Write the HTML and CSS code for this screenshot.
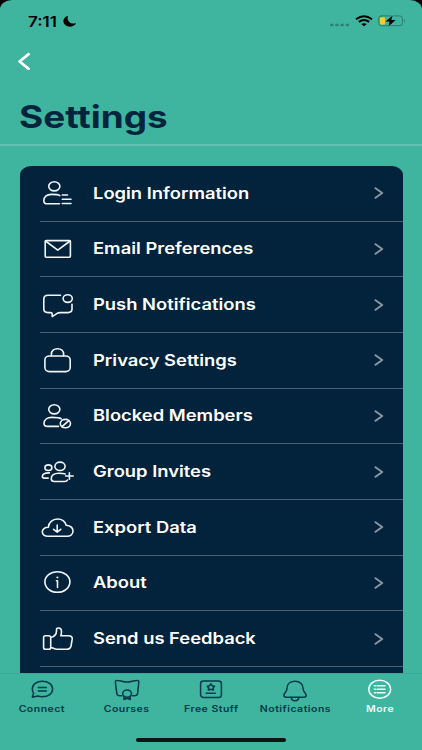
FILE: index.html
```html
<!DOCTYPE html>
<html lang="en">
  <head>
    <meta charset="UTF-8" />
    <meta name="viewport" content="width=device-width, initial-scale=1.0" />
    <title>Settings</title>
    <link rel="stylesheet" href="styles.css">
  </head>
  <body>
    <div class="screen">
      <header class="header">
        <div class="status-bar">
          <div class="status-left">
            <span class="time">7:11</span>
            <svg class="moon" viewBox="0 0 14 12"><path d="M5 0.7C2.4 1.3 0.4 3.4 0.4 6C0.4 9.3 3.4 11.7 7.2 11.7C10 11.7 12.3 10.2 13.2 8.1C12 8.6 10.8 8.7 9.6 8.5C5.8 8 3.6 4.4 5 0.7Z" /></svg>
          </div>
          <div class="status-right">
            <svg class="dots" viewBox="0 0 20 4"><rect x="0" y="0.7" width="3.6" height="2.6" rx="1" /><rect x="5.2" y="0.7" width="3.6" height="2.6" rx="1" /><rect x="10.4" y="0.7" width="3.6" height="2.6" rx="1" /><rect x="15.6" y="0.7" width="3.6" height="2.6" rx="1" /></svg>
            <svg class="wifi" viewBox="0 0 18 12">
              <path d="M1 4.2Q9 -1.6 17 4.2" />
              <path d="M3.8 6.9Q9 3.2 14.2 6.9" />
              <path class="fill" d="M6.2 9.1Q9 7.2 11.8 9.1L9 11.2Z" />
            </svg>
            <svg class="battery" viewBox="0 0 28 12">
              <rect class="shell" x="0.7" y="0.9" width="23.8" height="9.8" rx="2.8" />
              <path class="tip" d="M26 4.2Q28.2 5.8 26 7.4Z" />
              <rect class="level" x="2" y="2.2" width="5" height="7.2" rx="1" />
              <path class="bolt" d="M14.6 0.4L7.6 6.5H11.6L10.4 11.4L17.6 5.1H13.4Z" />
            </svg>
          </div>
        </div>
        <a href="#" class="back-btn" aria-label="Back">
          <svg viewBox="0 0 14 18"><path d="M11.6 2.2L2.6 9.5L11.6 16.8" /></svg>
        </a>
        <h1 class="title">Settings</h1>
      </header>

      <main class="content">
        <ul class="menu">
          <li>
            <a href="#" class="menu-item">
              <svg class="icon" viewBox="0 0 36 30"><ellipse cx="14.3" cy="8.3" rx="5.6" ry="4.6" /><path d="M19.8 17.6C18 16.5 15.5 16.4 11.5 16.4C6.5 16.4 3.8 18.8 3.8 22.7C3.8 25 5 25.8 7.5 25.8H19.5M22.3 17H27.5M22.3 21.2H31M22.3 25.5H31" /></svg>
              <span class="label">Login Information</span>
              <svg class="chevron" viewBox="0 0 10 12"><path d="M1.5 1.2L8.2 6L1.5 10.8" /></svg>
            </a>
          </li>
          <li>
            <a href="#" class="menu-item">
              <svg class="icon" viewBox="0 0 36 30"><rect x="5.2" y="6.6" width="25.2" height="16.7" rx="1" /><path d="M5.5 7L17.8 16.2L30.1 7" /></svg>
              <span class="label">Email Preferences</span>
              <svg class="chevron" viewBox="0 0 10 12"><path d="M1.5 1.2L8.2 6L1.5 10.8" /></svg>
            </a>
          </li>
          <li>
            <a href="#" class="menu-item">
              <svg class="icon" viewBox="0 0 36 30"><path d="M20.5 5.3H8Q3.8 5.3 3.8 9V19Q3.8 22.6 8 22.6H10.5Q12.2 22.6 12.2 24V26.6L17.5 23.2Q18.5 22.6 20 22.6H27.8Q32 22.6 32 19V14.2" /><ellipse cx="27.7" cy="8.6" rx="4.6" ry="3.8" /></svg>
              <span class="label">Push Notifications</span>
              <svg class="chevron" viewBox="0 0 10 12"><path d="M1.5 1.2L8.2 6L1.5 10.8" /></svg>
            </a>
          </li>
          <li>
            <a href="#" class="menu-item">
              <svg class="icon" viewBox="0 0 36 30"><rect x="4.9" y="11" width="25.3" height="15.6" rx="4.5" ry="4" /><path d="M11.4 11V9.2C11.4 5.8 14 3.8 17.5 3.8S23.6 5.8 23.6 9.2V11" /></svg>
              <span class="label">Privacy Settings</span>
              <svg class="chevron" viewBox="0 0 10 12"><path d="M1.5 1.2L8.2 6L1.5 10.8" /></svg>
            </a>
          </li>
          <li>
            <a href="#" class="menu-item">
              <svg class="icon" viewBox="0 0 36 30"><ellipse cx="14.3" cy="8.3" rx="5.6" ry="4.6" /><path d="M21.3 17.8C19.5 16.6 16 16.4 12 16.4C7 16.4 4 18.8 4 22.5C4 24.7 5.2 25.4 7.5 25.4H18.5" /><ellipse cx="25.4" cy="22.6" rx="5.1" ry="4.2" /><path d="M22 25.6L28.8 19.6" /></svg>
              <span class="label">Blocked Members</span>
              <svg class="chevron" viewBox="0 0 10 12"><path d="M1.5 1.2L8.2 6L1.5 10.8" /></svg>
            </a>
          </li>
          <li>
            <a href="#" class="menu-item">
              <svg class="icon" viewBox="0 0 36 30"><ellipse cx="20" cy="9.3" rx="5.1" ry="4.2" /><ellipse cx="8.4" cy="10.7" rx="3.5" ry="2.8" /><path d="M25.2 17C23.5 16.2 21.5 16.2 18.7 16.2C14 16.2 11.2 18.4 11.2 21.8C11.2 23.8 12.3 24.5 14.5 24.5H24.5Q27 24.5 27.5 23M9.4 15.9C5 15.7 2.3 17 2.3 19.6Q2.3 21.1 4.3 21.1H8.2M29.4 15.8V22.2M25.6 19H33.2" /></svg>
              <span class="label">Group Invites</span>
              <svg class="chevron" viewBox="0 0 10 12"><path d="M1.5 1.2L8.2 6L1.5 10.8" /></svg>
            </a>
          </li>
          <li>
            <a href="#" class="menu-item">
              <svg class="icon" viewBox="0 0 36 30"><path d="M8 24.3C4.6 24.3 2.3 22.4 2.3 19.8C2.3 17.2 4.6 15.2 8.4 15.2C8.6 10.5 12.5 7 17.5 7C22 7 25 9.2 26.2 13.2C30.5 13.7 33 16 33 19.1C33 22.2 30.5 24.3 27 24.3Z" /><path d="M17.2 13V20M13.6 17.3L17.2 20.2L20.8 17.3" /></svg>
              <span class="label">Export Data</span>
              <svg class="chevron" viewBox="0 0 10 12"><path d="M1.5 1.2L8.2 6L1.5 10.8" /></svg>
            </a>
          </li>
          <li>
            <a href="#" class="menu-item">
              <svg class="icon" viewBox="0 0 36 30"><ellipse cx="17.4" cy="14" rx="12.5" ry="10.3" /><path d="M16.4 12.7H17.5V19.4" /><ellipse class="dot" cx="17.4" cy="9.4" rx="1.1" ry="0.9" /></svg>
              <span class="label">About</span>
              <svg class="chevron" viewBox="0 0 10 12"><path d="M1.5 1.2L8.2 6L1.5 10.8" /></svg>
            </a>
          </li>
          <li>
            <a href="#" class="menu-item">
              <svg class="icon" viewBox="0 0 36 30"><path d="M10.7 14V23.5Q10.7 25.3 8.8 25.3H5.4Q3.6 25.3 3.6 23.5V13.6Q3.6 11.8 5.4 11.8H8.8Q10.7 11.8 10.7 13.6C14.5 12.5 16.5 10.5 16.5 7V5.5Q16.5 4 18.4 4Q21.5 4 21.5 7.5Q21.5 9.5 20.8 11.8H28.5Q32.6 11.8 32.2 15.2L31 22Q30.3 25.3 26.5 25.3H17C14 25.3 13 23.5 10.7 23.5" /></svg>
              <span class="label">Send us Feedback</span>
              <svg class="chevron" viewBox="0 0 10 12"><path d="M1.5 1.2L8.2 6L1.5 10.8" /></svg>
            </a>
          </li>
          <li class="menu-rest"></li>
        </ul>
      </main>

      <footer class="footer">
        <nav class="tabs">
          <a href="#" class="tab">
            <svg viewBox="0 0 30 24"><path d="M5.3 19.2L6.6 15.2Q5.3 13.5 5.3 11.1C5.3 6.6 9.7 3.2 15.4 3.2S25.6 6.6 25.6 11.1S21.4 18.7 15.4 18.7Q12.5 18.7 10.8 18Z" /><path d="M11.3 9.4H19.3M11.3 13.1H19.3" /></svg>
            <span>Connect</span>
          </a>
          <a href="#" class="tab">
            <svg viewBox="0 0 30 24"><path d="M9.8 17.8L6.7 17.4Q5 17.1 4.8 15.6L3.4 4.2Q3.3 2.2 5.4 2.4C9 2.6 11.5 4.1 15.1 4.1S21.2 2.6 24.8 2.4Q26.9 2.2 26.8 4.2L25.6 15.6Q25.4 17.1 23.7 17.4L20.5 17.8" /><ellipse cx="15.1" cy="15.6" rx="4.4" ry="3.7" /><path d="M12 18.3V21.5L15.1 20.2L18.2 21.5V18.3" /></svg>
            <span>Courses</span>
          </a>
          <a href="#" class="tab">
            <svg viewBox="0 0 30 24"><rect x="4.6" y="2.9" width="20.8" height="16.6" rx="3" ry="2.5" /><path d="M10.3 15.3H19.3" /><path class="star" d="M14.9 5.9L16.3 7.8L18.5 8.3L17.2 9.9L17.4 12L14.9 11.3L12.4 12L12.6 9.9L11.3 8.3L13.5 7.8Z" /></svg>
            <span>Free Stuff</span>
          </a>
          <a href="#" class="tab">
            <svg viewBox="0 0 30 24"><path d="M15 3.3C10 3.3 7 6.1 7 10.2C7 14 3.9 15 3.9 17.2Q3.9 19.2 6.5 19.2H23.7Q26.2 19.2 26.2 17.2C26.2 15 23 14 23 10.2C23 6.1 20 3.3 15 3.3Z" /><path d="M11.2 19.4Q11.4 22.7 15 22.7T18.8 19.4" /></svg>
            <span>Notifications</span>
          </a>
          <a href="#" class="tab active">
            <svg viewBox="0 0 30 24"><ellipse cx="14.7" cy="11.3" rx="10.9" ry="9" /><path d="M12.2 7.8H20M12.2 11.3H20M12.2 14.8H20M9.3 7.8H10.6M9.3 11.3H10.6M9.3 14.8H10.6" /></svg>
            <span>More</span>
          </a>
        </nav>
        <div class="home-indicator"></div>
      </footer>
    </div>
  </body>
</html>
```

FILE: styles.css
```css
* {
  box-sizing: border-box;
}

body {
  margin: 0;
  background-color: #000;
  font-family: Inter, "Liberation Sans", sans-serif;
}

svg {
  display: block;
  flex-shrink: 0;
  fill: none;
  stroke-linecap: round;
  stroke-linejoin: round;
}

a {
  text-decoration: none;
}

.screen {
  width: 422px;
  height: 750px;
  display: flex;
  flex-direction: column;
  overflow: hidden;
  background-color: #3fb49f;
  border-radius: 12px 12px 0 0 / 9px 9px 0 0;
}

/* Header */
.header {
  height: 146px;
  flex-shrink: 0;
  border-bottom: 2px solid #62c1b0;
}

.status-bar {
  display: flex;
  justify-content: space-between;
  padding: 15px 16px 0 28px;
  height: 52px;
}

.status-left,
.status-right {
  display: flex;
}

.time {
  width: 35px;
  font-size: 14.5px;
  line-height: 13px;
  font-weight: 600;
  transform: scaleX(1.17);
  transform-origin: left;
}

.moon {
  width: 14px;
  height: 12px;
}

.moon path {
  fill: #000;
}

.dots {
  width: 20px;
  height: 4px;
  margin: 8px 5px 0 0;
  fill: #2c8474;
}

.wifi {
  width: 18px;
  height: 12px;
  margin-right: 5px;
  stroke: #000;
  stroke-width: 2;
  stroke-linecap: butt;
}

.wifi .fill {
  fill: #000;
  stroke: none;
}

.battery {
  width: 28px;
  height: 12px;
}

.shell {
  stroke: #2a7d6e;
}

.tip {
  fill: #2a7d6e;
}

.level {
  fill: #f0d02c;
}

.bolt {
  fill: #000;
  stroke: #3fb49f;
  stroke-width: 1.2;
  paint-order: stroke;
}

.back-btn {
  display: block;
  width: 14px;
  margin-left: 17px;
}

.back-btn svg {
  width: 14px;
  height: 18px;
  stroke: #fff;
  stroke-width: 2.8;
}

.title {
  margin: 28px 0 0 19px;
  color: #02253d;
  font-size: 31px;
  line-height: 38px;
  font-weight: 700;
  transform: scaleX(1.19);
  transform-origin: left;
}

/* Settings list */
.content {
  flex: 1;
  min-height: 0;
  overflow: hidden;
  padding: 19.5px 19.5px 0;
}

.menu {
  list-style: none;
  margin: 0;
  padding: 0.5px 0 0 20.5px;
  background-color: #02233b;
  border-radius: 11px 11px 0 0 / 9px 9px 0 0;
}

.menu-item {
  display: flex;
  align-items: center;
  height: 55.67px;
  padding-right: 19px;
  border-bottom: 1px solid #4b6172;
  color: #fff;
}

.icon {
  width: 36px;
  height: 30px;
  stroke: #f1f5f8;
  stroke-width: 1.6;
}

.icon .dot {
  fill: #f1f5f8;
  stroke: none;
}

.label {
  flex: 1;
  margin-left: 17px;
  padding-top: 1px;
  font-size: 15.5px;
  line-height: 20px;
  font-weight: 600;
  white-space: nowrap;
  transform: scaleX(1.185);
  transform-origin: left;
}

.chevron {
  width: 10px;
  height: 12px;
  stroke: #8796a3;
  stroke-width: 2;
}

.menu-rest {
  height: 40px;
}

/* Bottom tabs */
.footer {
  height: 77px;
  flex-shrink: 0;
  border-top: 1px solid #39a995;
}

.tabs {
  display: flex;
  height: 64px;
  padding-top: 4px;
}

.tab {
  flex: 1;
  display: flex;
  flex-direction: column;
  align-items: center;
  color: #06394a;
}

.tab svg {
  width: 30px;
  height: 24px;
  stroke: currentColor;
  stroke-width: 1.5;
}

.tab .star {
  stroke-width: 1.6;
}

.tab span {
  margin-top: 1px;
  font-size: 9px;
  line-height: 12px;
  font-weight: 600;
  letter-spacing: 0.4px;
  white-space: nowrap;
  transform: scaleX(1.17);
}

.tab.active {
  color: #f2fffc;
}

.home-indicator {
  width: 150px;
  height: 4px;
  margin: 0 auto;
  border-radius: 2px;
  background-color: #0b1513;
}
```
